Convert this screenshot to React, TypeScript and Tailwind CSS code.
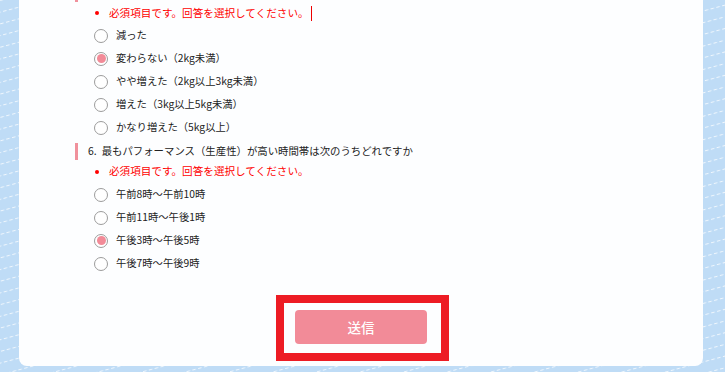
import React from "react";

const font = { fontFamily: '"Noto Sans CJK JP", "Noto Sans", sans-serif' };

type Option = { label: string; checked?: boolean };

const q5Options: Option[] = [
  { label: "減った" },
  { label: "変わらない（2kg未満）", checked: true },
  { label: "やや増えた（2kg以上3kg未満）" },
  { label: "増えた（3kg以上5kg未満）" },
  { label: "かなり増えた（5kg以上）" },
];

const q6Options: Option[] = [
  { label: "午前8時〜午前10時" },
  { label: "午前11時〜午後1時" },
  { label: "午後3時〜午後5時", checked: true },
  { label: "午後7時〜午後9時" },
];

const Radio: React.FC<{ checked?: boolean }> = ({ checked }) => (
  <span className="w-[14px] h-[14px] rounded-full border border-[#9c9c9c] bg-white flex items-center justify-center flex-shrink-0">
    {checked && <span className="w-[9px] h-[9px] rounded-full bg-[#f28b98]" />}
  </span>
);

const RadioRow: React.FC<{ option: Option }> = ({ option }) => (
  <div className="h-[23px] flex items-center pl-[19px] gap-[8px]">
    <Radio checked={option.checked} />
    <span className="text-[10.3px] text-[#222] leading-none">{option.label}</span>
  </div>
);

const Required: React.FC<{ cursor?: boolean; className: string }> = ({ cursor, className }) => (
  <div className={`flex items-center pl-[20px] ${className}`}>
    <span className="w-[4px] h-[4px] rounded-full bg-[#f00] flex-shrink-0" />
    <span className="ml-[10px] text-[10.6px] text-[#f00] leading-none">
      必須項目です。回答を選択してください。
    </span>
    {cursor && <span className="ml-[2px] h-[15px] border-l border-[#e00]" />}
  </div>
);

const App: React.FC = () => {
  return (
    <div className="relative w-[725px] h-[372px] overflow-hidden bg-[#bfdcf6]" style={font}>
      {/* background stripes */}
      <svg className="absolute inset-0" width="725" height="372">
        <defs>
          <pattern
            id="stripes"
            patternUnits="userSpaceOnUse"
            width="6"
            height="11.3"
            patternTransform="rotate(-15)"
          >
            <rect x="0" y="0" width="3.5" height="1" fill="#ffffff" opacity="0.75" />
          </pattern>
        </defs>
        <rect width="725" height="372" fill="url(#stripes)" />
      </svg>

      {/* form card */}
      <div className="relative ml-[19px] w-[684px] bg-[#fdfeff] rounded-b-lg pb-[5px]">
        <div className="pl-[56px]">
          <div className="h-[2px] w-[3px] bg-[#f0919c]" />
          <Required cursor className="h-[22px]" />
          {q5Options.map((o) => (
            <RadioRow key={o.label} option={o} />
          ))}

          {/* question 6 */}
          <div className="mt-[4px] h-[17px] flex items-center text-[10.4px] text-[#222] leading-none">
            <span className="w-[3px] h-[17px] bg-[#f0919c]" />
            <span className="ml-[10px]">6.</span>
            <span className="ml-[5px]">最もパフォーマンス（生産性）が高い時間帯は次のうちどれですか</span>
          </div>
          <Required className="h-[23px]" />
          {q6Options.map((o) => (
            <RadioRow key={o.label} option={o} />
          ))}
        </div>

        {/* submit */}
        <div className="mt-[20px] flex justify-center pl-[3px]">
          <div className="border-[8px] border-[#ed1c24] pt-[7px] pb-[9px] pl-[11px] pr-[14px]">
            <button className="w-[132px] h-[34px] rounded-[4px] bg-[#f28b98] text-white text-[13.5px] font-medium flex items-center justify-center">
              送信
            </button>
          </div>
        </div>
      </div>
    </div>
  );
};

export default App;
